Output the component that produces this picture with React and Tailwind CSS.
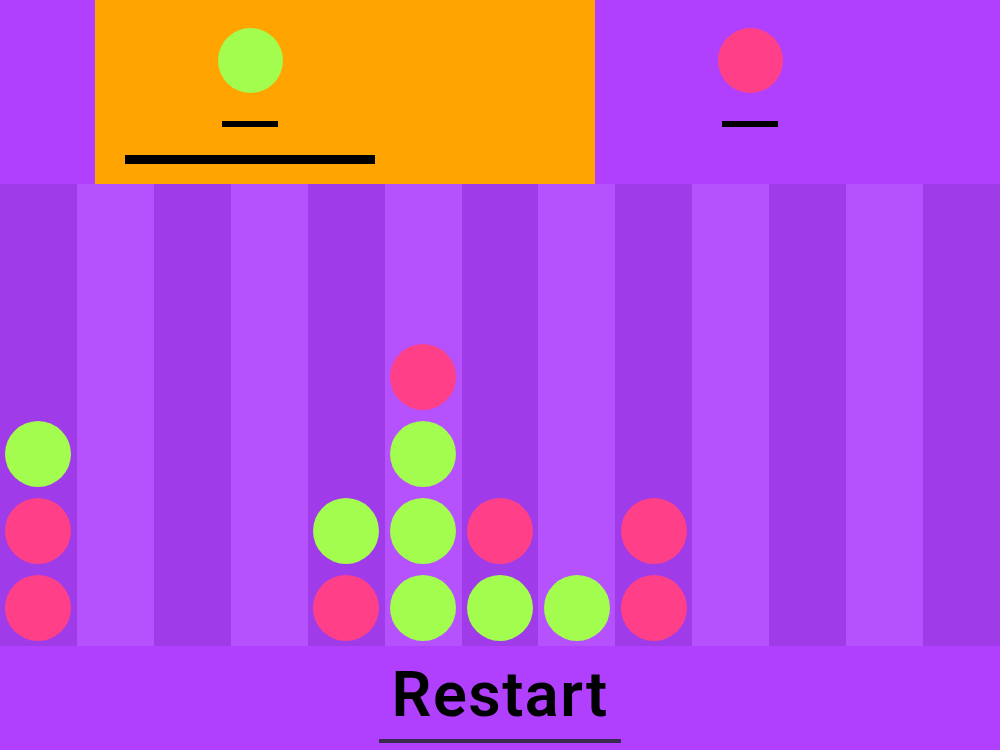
import React from 'react';

// board state, columns left to right, each listed bottom to top
const COLUMNS = [
    ['r', 'r', 'g'],
    [],
    [],
    [],
    ['r', 'g'],
    ['g', 'g', 'g', 'r'],
    ['g', 'r'],
    ['g'],
    ['r', 'r'],
    [],
    [],
    [],
    [],
];
const ROWS = 6;

const Disc = ({ color }) => (
    <div className={`w-[66px] h-[66px] rounded-full ${color === 'g' ? 'bg-[#a2fd4e]' : 'bg-[#ff3f87]'}`} />
);

const PlayerSlot = ({ color, active }) => (
    <div className="relative flex flex-col items-center pt-[28px]">
        <div className={`w-[65px] h-[65px] rounded-full ${color === 'g' ? 'bg-[#a2fd4e]' : 'bg-[#ff3f87]'}`} />
        {/* score placeholder */}
        <div className="mt-[28px] w-[56px] h-[6px] bg-black" />
        {active && <div className="mt-[28px] w-[250px] h-[9px] bg-black" />}
    </div>
);

const App = () => {
    return (
        <div className="w-[1000px] h-[750px] flex flex-col bg-[#b040fe] overflow-hidden" style={{ fontFamily: '"Liberation Sans", Arial, sans-serif' }}>
            {/* Header: players */}
            <div className="relative h-[184px] shrink-0 grid grid-cols-2">
                <div className="absolute top-0 bottom-0 left-[95px] w-[500px] bg-[#ffa400]" />
                <PlayerSlot color="g" active />
                <PlayerSlot color="r" />
            </div>

            {/* Board */}
            <div className="flex h-[462px] shrink-0">
                {COLUMNS.map((col, ci) => (
                    <div key={ci} className={`flex-1 flex flex-col ${ci % 2 === 0 ? 'bg-[#a03be9]' : 'bg-[#b552fe]'}`}>
                        {Array.from({ length: ROWS }).map((_, ri) => {
                            const idx = ROWS - 1 - ri;
                            const piece = col[idx];
                            return (
                                <div key={ri} className="h-[77px] flex items-center justify-center">
                                    {piece && <Disc color={piece} />}
                                </div>
                            );
                        })}
                    </div>
                ))}
            </div>

            {/* Footer */}
            <div className="flex-1 flex justify-center items-start">
                <button className="mt-[17px] px-[12px] pb-[13px] border-b-4 border-[#3b2a52] font-['Roboto',sans-serif] text-[63px] leading-none font-semibold text-black tracking-[1.5px]">
                    Restart
                </button>
            </div>
        </div>
    );
};

export default App;
